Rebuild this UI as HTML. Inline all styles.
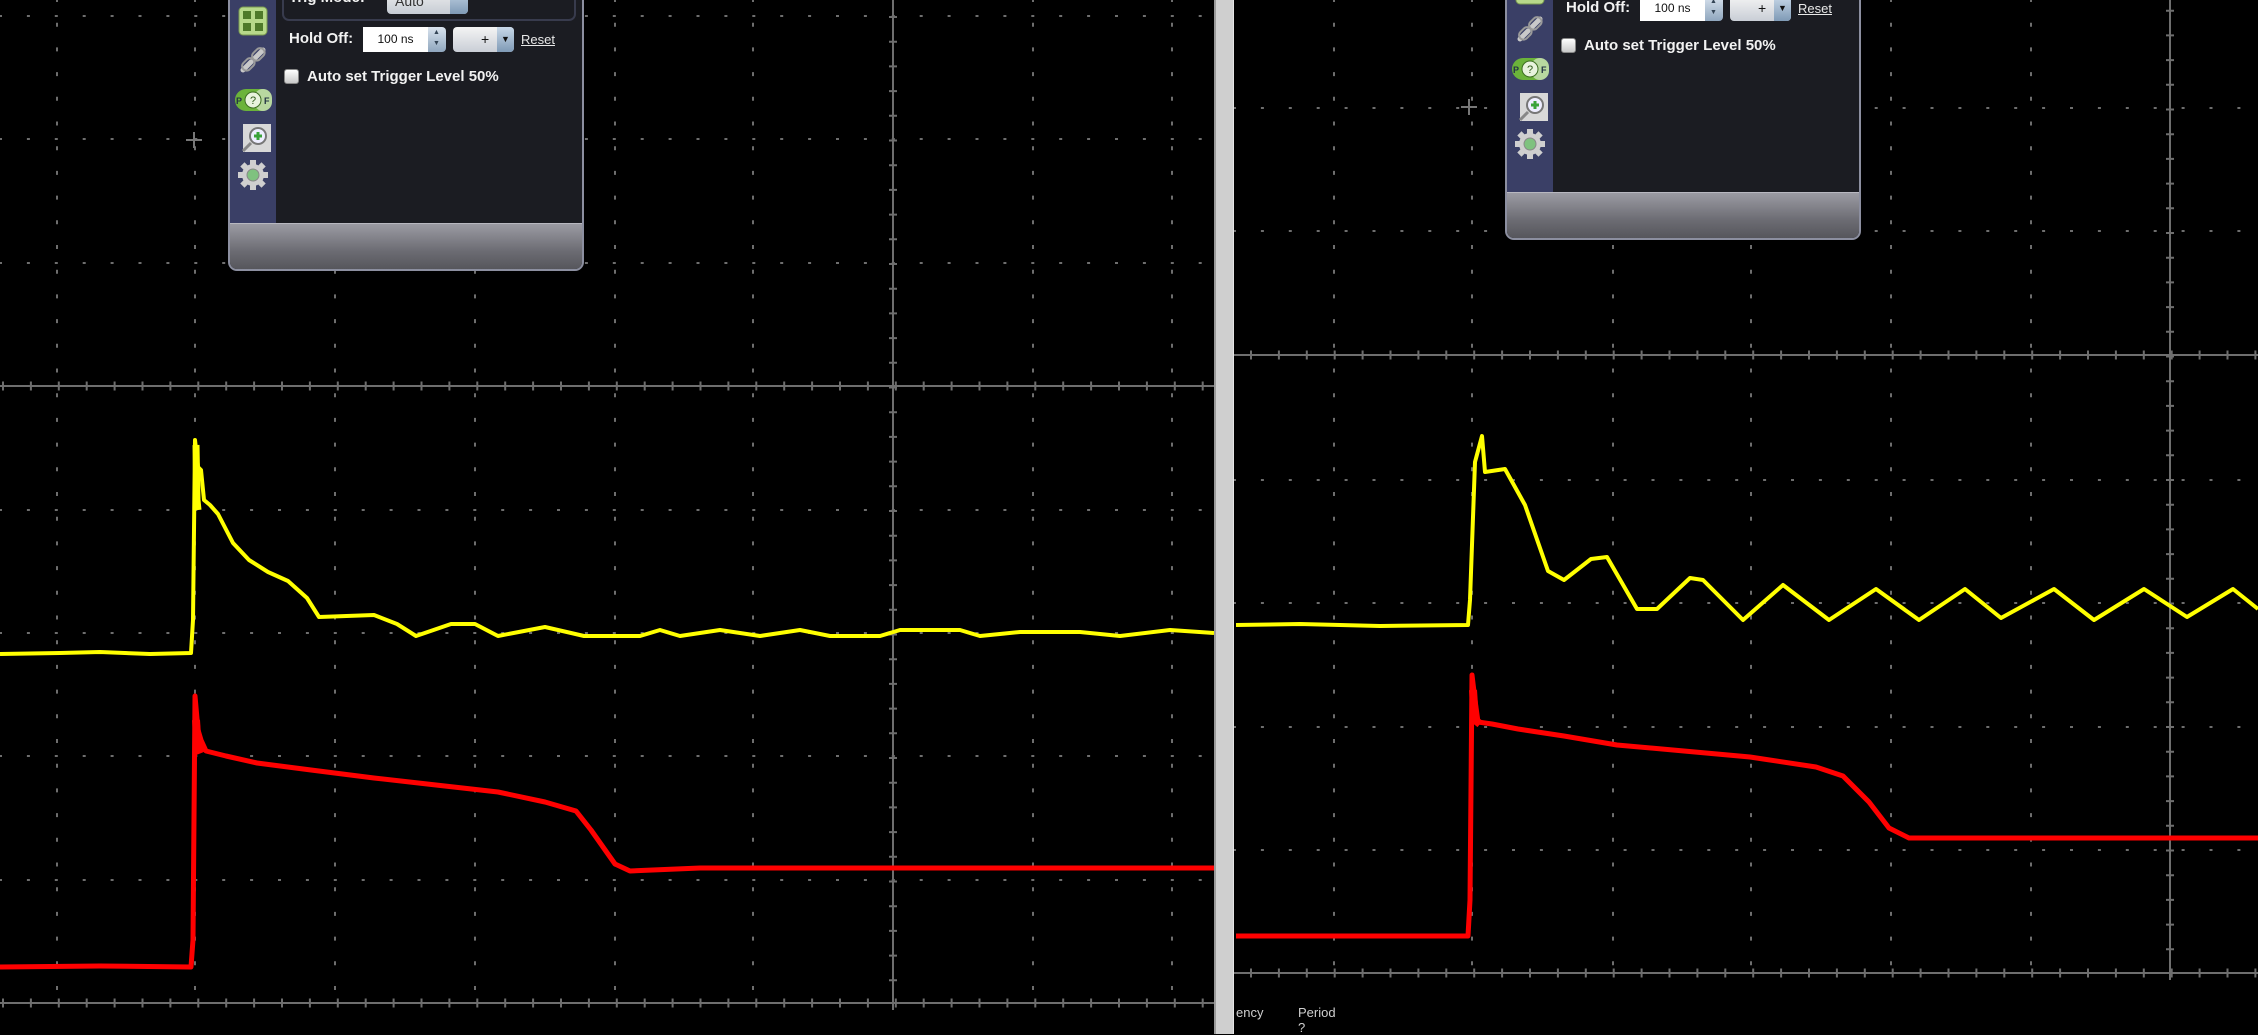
<!DOCTYPE html>
<html><head><meta charset="utf-8"><style>
*{margin:0;padding:0;box-sizing:border-box}
body{width:2258px;height:1034px;background:#000;overflow:hidden;position:relative;font-family:"Liberation Sans",sans-serif}
svg.g{position:absolute;left:0;top:0}
.div{position:absolute;left:1214px;top:0;width:20px;height:1034px;background:#cfcfcf;border-left:2px solid #9a9a9a;border-right:1px solid #e6e6e6}
.panel{position:absolute;width:356px;height:310px;border:2px solid #8c8fa0;border-radius:0 0 9px 9px;background:#1b1c22;overflow:hidden}
.side{position:absolute;left:0;top:0;width:46px;height:264px;background:#3a3f66}
.foot{position:absolute;left:0;bottom:0;width:100%;height:46px;background:linear-gradient(#9b9ba3,#6c6c73 60%,#56565c);border-top:1px solid #b8b8c0}
.grp{position:absolute;left:52px;top:-10px;width:294px;height:68px;border:2px solid #383b4d;border-radius:7px}
.lbl{position:absolute;color:#f2f2f2;font-weight:bold;font-size:15px;white-space:nowrap}
.inp{position:absolute;left:133px;top:64px;width:65px;height:25px;background:#fff;color:#111;font-size:12px;text-align:center;line-height:25px}
.spin{position:absolute;left:198px;top:64px;width:18px;height:25px;background:linear-gradient(#d9e3ee,#8fa6be);border-radius:0 4px 4px 0}
.dd{position:absolute;left:223px;top:64px;width:61px;height:25px;background:linear-gradient(#f4f4f4,#c9ced6);border-radius:4px;font-size:14px;color:#111}
.dd b{position:absolute;right:0;top:0;width:17px;height:25px;background:linear-gradient(#c8d8e8,#7f9ab6);border-radius:0 4px 4px 0;font-size:9px;text-align:center;line-height:25px;font-weight:normal}
.rst{position:absolute;left:291px;top:69px;color:#e8e8e8;font-size:13px;text-decoration:underline}
.cb{position:absolute;left:54px;top:106px;width:15px;height:15px;background:linear-gradient(#fff,#c9c9c9);border-radius:3px;border:1px solid #888}
</style></head><body>
<svg class="g" width="2258" height="1034" xmlns="http://www.w3.org/2000/svg">
<g stroke="#6e6e6e" fill="none">
<!-- left dashed verticals -->
<g stroke-width="2" stroke-dasharray="4 20.7" stroke-dashoffset="2">
<line x1="57" y1="0" x2="57" y2="1003"/><line x1="195" y1="0" x2="195" y2="1003"/><line x1="335" y1="0" x2="335" y2="1003"/><line x1="475" y1="0" x2="475" y2="1003"/><line x1="615" y1="0" x2="615" y2="1003"/><line x1="753" y1="0" x2="753" y2="1003"/><line x1="1033" y1="0" x2="1033" y2="1003"/><line x1="1172" y1="0" x2="1172" y2="1003"/>
</g>
<g stroke-width="2" stroke-dasharray="3 24.9" stroke-dashoffset="1">
<line x1="0" y1="16" x2="1214" y2="16"/><line x1="0" y1="139" x2="1214" y2="139"/><line x1="0" y1="263" x2="1214" y2="263"/><line x1="0" y1="510" x2="1214" y2="510"/><line x1="0" y1="633" x2="1214" y2="633"/><line x1="0" y1="756" x2="1214" y2="756"/><line x1="0" y1="880" x2="1214" y2="880"/>
</g>
<g stroke-width="2"><line x1="0" y1="386" x2="1214" y2="386"/><line x1="0" y1="1003" x2="1214" y2="1003"/><line x1="893" y1="0" x2="893" y2="1010"/></g>
<g stroke-width="2" stroke-dasharray="2 25.9" stroke-dashoffset="-1"><line x1="1" y1="386" x2="1214" y2="386" stroke-width="9"/><line x1="1" y1="1003" x2="1214" y2="1003" stroke-width="9"/></g>
<line x1="893" y1="16" x2="893" y2="1003" stroke-width="8" stroke-dasharray="2 22.7"/>
<!-- right -->
<g stroke-width="2" stroke-dasharray="4 20.7" stroke-dashoffset="2">
<line x1="1334" y1="0" x2="1334" y2="973"/><line x1="1472" y1="0" x2="1472" y2="973"/><line x1="1613" y1="0" x2="1613" y2="973"/><line x1="1751" y1="0" x2="1751" y2="973"/><line x1="1891" y1="0" x2="1891" y2="973"/><line x1="2031" y1="0" x2="2031" y2="973"/>
</g>
<g stroke-width="2" stroke-dasharray="3 24.9" stroke-dashoffset="1">
<line x1="1234" y1="108" x2="2258" y2="108"/><line x1="1234" y1="231" x2="2258" y2="231"/><line x1="1234" y1="480" x2="2258" y2="480"/><line x1="1234" y1="603" x2="2258" y2="603"/><line x1="1234" y1="727" x2="2258" y2="727"/><line x1="1234" y1="850" x2="2258" y2="850"/>
</g>
<g stroke-width="2"><line x1="1234" y1="355" x2="2258" y2="355"/><line x1="1234" y1="973" x2="2258" y2="973"/><line x1="2170" y1="0" x2="2170" y2="980"/></g>
<g stroke-dasharray="2 25.9"><line x1="1250" y1="355" x2="2258" y2="355" stroke-width="9"/><line x1="1250" y1="973" x2="2258" y2="973" stroke-width="9"/></g>
<line x1="2170" y1="-15" x2="2170" y2="973" stroke-width="8" stroke-dasharray="2 22.7"/>
<line x1="0" y1="1010" x2="0" y2="1010"/>
</g>
<g stroke="#777" stroke-width="2"><line x1="186" y1="140" x2="202" y2="140"/><line x1="194" y1="132" x2="194" y2="148"/><line x1="1461" y1="107" x2="1477" y2="107"/><line x1="1469" y1="99" x2="1469" y2="115"/></g>
<!-- traces left -->
<polyline fill="none" stroke="#ffff00" stroke-width="4" stroke-linejoin="round" points="0,654 60,653 100,652 150,654 191,653 193,620 195,440 198,467 201,470 204,500 210,505 218,514 233,543 249,560 268,572 288,581 307,598 319,617 374,615 397,624 416,636 451,624 475,624 498,636 545,627 584,636 640,636 660,630 680,636 720,630 760,636 800,630 830,636 880,636 900,630 960,630 980,636 1020,632 1080,632 1120,636 1170,630 1214,633"/>
<polyline fill="none" stroke="#ffff00" stroke-width="7" points="196,445 197,500 198,510"/>
<polyline fill="none" stroke="#ff0000" stroke-width="5" stroke-linejoin="round" points="0,967 100,966 191,967 193,940 195,696 198,730 201,740 206,751 226,756 257,763 311,770 374,778 436,785 498,792 545,802 576,811 591,830 615,864 630,871 700,868 900,868 1214,868"/>
<polyline fill="none" stroke="#ff0000" stroke-width="8" points="196,720 198,750 203,748"/>
<!-- traces right -->
<polyline fill="none" stroke="#ffff00" stroke-width="4" stroke-linejoin="round" points="1236,625 1300,624 1380,626 1468,625 1470,600 1475,462 1482,436 1485,472 1505,469 1525,505 1548,571 1564,580 1591,559 1607,557 1637,609 1657,609 1690,578 1703,580 1743,620 1783,585 1829,620 1876,589 1919,620 1965,589 2001,618 2054,589 2094,620 2144,589 2187,617 2233,589 2258,609"/>
<polyline fill="none" stroke="#ff0000" stroke-width="5" stroke-linejoin="round" points="1236,936 1350,936 1468,936 1470,900 1472,675 1475,700 1478,722 1492,724 1518,729 1564,736 1617,745 1684,751 1750,757 1816,767 1843,776 1869,802 1889,828 1909,838 2000,838 2258,838"/>
<polyline fill="none" stroke="#ff0000" stroke-width="8" points="1473,690 1475,720 1480,724"/>
</svg>
<div class="div"></div>
<div style="position:absolute;left:1236px;top:1005px;color:#cfcfcf;font-size:13px">ency</div>
<div style="position:absolute;left:1298px;top:1005px;color:#cfcfcf;font-size:13px;line-height:15px">Period<br>?</div>

<div class="panel" style="left:228px;top:-39px">
<div class="side"></div>
<svg style="position:absolute;left:0;top:39px" width="46" height="200">
<rect x="9" y="5" width="28" height="28" rx="4" fill="#b7d98a" stroke="#7a9a50"/>
<rect x="13" y="9" width="8" height="8" fill="#4f7a2a"/><rect x="25" y="9" width="8" height="8" fill="#4f7a2a"/><rect x="13" y="21" width="8" height="8" fill="#4f7a2a"/><rect x="25" y="21" width="8" height="8" fill="#4f7a2a"/>
<g stroke="#c9c9c9" stroke-width="5" fill="none" stroke-linecap="round"><path d="M13 68 l8 -8 M25 56 l8 -8"/></g>
<g stroke="#9a9a9a" stroke-width="2" fill="none"><rect x="11" y="58" width="14" height="9" rx="4.5" transform="rotate(-45 18 62)"/><rect x="21" y="48" width="14" height="9" rx="4.5" transform="rotate(-45 28 52)"/></g>
<rect x="5" y="87" width="37" height="22" rx="11" fill="#6bb33a"/><rect x="24" y="87" width="18" height="22" rx="9" fill="#b8d8a0"/>
<circle cx="23" cy="98" r="8" fill="#e8f3dd" stroke="#3c6e20"/><text x="23" y="102" font-size="11" text-anchor="middle" fill="#2e5a18" font-family="Liberation Sans">?</text>
<text x="6" y="102" font-size="9" fill="#234" font-weight="bold" font-family="Liberation Sans">P</text><text x="34" y="102" font-size="9" fill="#234" font-weight="bold" font-family="Liberation Sans">F</text>
<rect x="13" y="122" width="28" height="28" fill="#d8d8d8"/><circle cx="28" cy="134" r="8" fill="#eef" stroke="#777" stroke-width="2"/><path d="M28 130v8M24 134h8" stroke="#3aa33a" stroke-width="3"/><path d="M21 141 l-8 8" stroke="#888" stroke-width="3"/>
<g transform="translate(23 173)"><circle r="11" fill="#cfcfcf"/><g fill="#cfcfcf"><rect x="-3" y="-15" width="6" height="30"/><rect x="-15" y="-3" width="30" height="6"/><rect x="-3" y="-15" width="6" height="30" transform="rotate(45)"/><rect x="-3" y="-15" width="6" height="30" transform="rotate(-45)"/></g><circle r="6" fill="#7fc27f" stroke="#888"/></g>
</svg>
<div class="grp"></div>
<div class="lbl" style="left:59px;top:26px">Trig Mode:</div>
<div style="position:absolute;left:157px;top:26px;width:81px;height:25px;background:linear-gradient(#f0f0f0,#c6ccd4);border-radius:4px;color:#333;font-size:14px;padding-left:8px;line-height:25px">Auto<b style="position:absolute;right:0;top:0;width:18px;height:25px;background:linear-gradient(#c8d8e8,#7f9ab6);border-radius:0 4px 4px 0"></b></div>
<div class="lbl" style="left:59px;top:67px">Hold Off:</div>
<div class="inp">100 ns</div><div class="spin"><span style="position:absolute;left:5px;top:2px;font-size:7px;color:#345">▲</span><span style="position:absolute;left:5px;top:13px;font-size:7px;color:#345">▼</span></div>
<div class="dd"><span style="position:absolute;left:28px;top:4px">+</span><b>▼</b></div>
<div class="rst">Reset</div>
<div class="cb"></div>
<div class="lbl" style="left:77px;top:105px">Auto set Trigger Level 50%</div>
<div class="foot"></div>
</div>

<div class="panel" style="left:1505px;top:-70px">
<div class="side"></div>
<svg style="position:absolute;left:0;top:39px" width="46" height="200">
<rect x="9" y="5" width="28" height="28" rx="4" fill="#b7d98a" stroke="#7a9a50"/>
<g stroke="#c9c9c9" stroke-width="5" fill="none" stroke-linecap="round"><path d="M13 68 l8 -8 M25 56 l8 -8"/></g>
<g stroke="#9a9a9a" stroke-width="2" fill="none"><rect x="11" y="58" width="14" height="9" rx="4.5" transform="rotate(-45 18 62)"/><rect x="21" y="48" width="14" height="9" rx="4.5" transform="rotate(-45 28 52)"/></g>
<rect x="5" y="87" width="37" height="22" rx="11" fill="#6bb33a"/><rect x="24" y="87" width="18" height="22" rx="9" fill="#b8d8a0"/>
<circle cx="23" cy="98" r="8" fill="#e8f3dd" stroke="#3c6e20"/><text x="23" y="102" font-size="11" text-anchor="middle" fill="#2e5a18" font-family="Liberation Sans">?</text>
<text x="6" y="102" font-size="9" fill="#234" font-weight="bold" font-family="Liberation Sans">P</text><text x="34" y="102" font-size="9" fill="#234" font-weight="bold" font-family="Liberation Sans">F</text>
<rect x="13" y="122" width="28" height="28" fill="#d8d8d8"/><circle cx="28" cy="134" r="8" fill="#eef" stroke="#777" stroke-width="2"/><path d="M28 130v8M24 134h8" stroke="#3aa33a" stroke-width="3"/><path d="M21 141 l-8 8" stroke="#888" stroke-width="3"/>
<g transform="translate(23 173)"><circle r="11" fill="#cfcfcf"/><g fill="#cfcfcf"><rect x="-3" y="-15" width="6" height="30"/><rect x="-15" y="-3" width="30" height="6"/><rect x="-3" y="-15" width="6" height="30" transform="rotate(45)"/><rect x="-3" y="-15" width="6" height="30" transform="rotate(-45)"/></g><circle r="6" fill="#7fc27f" stroke="#888"/></g>
</svg>
<div class="grp"></div>
<div class="lbl" style="left:59px;top:67px">Hold Off:</div>
<div class="inp">100 ns</div><div class="spin"><span style="position:absolute;left:5px;top:2px;font-size:7px;color:#345">▲</span><span style="position:absolute;left:5px;top:13px;font-size:7px;color:#345">▼</span></div>
<div class="dd"><span style="position:absolute;left:28px;top:4px">+</span><b>▼</b></div>
<div class="rst">Reset</div>
<div class="cb"></div>
<div class="lbl" style="left:77px;top:105px">Auto set Trigger Level 50%</div>
<div class="foot"></div>
</div>
</body></html>
